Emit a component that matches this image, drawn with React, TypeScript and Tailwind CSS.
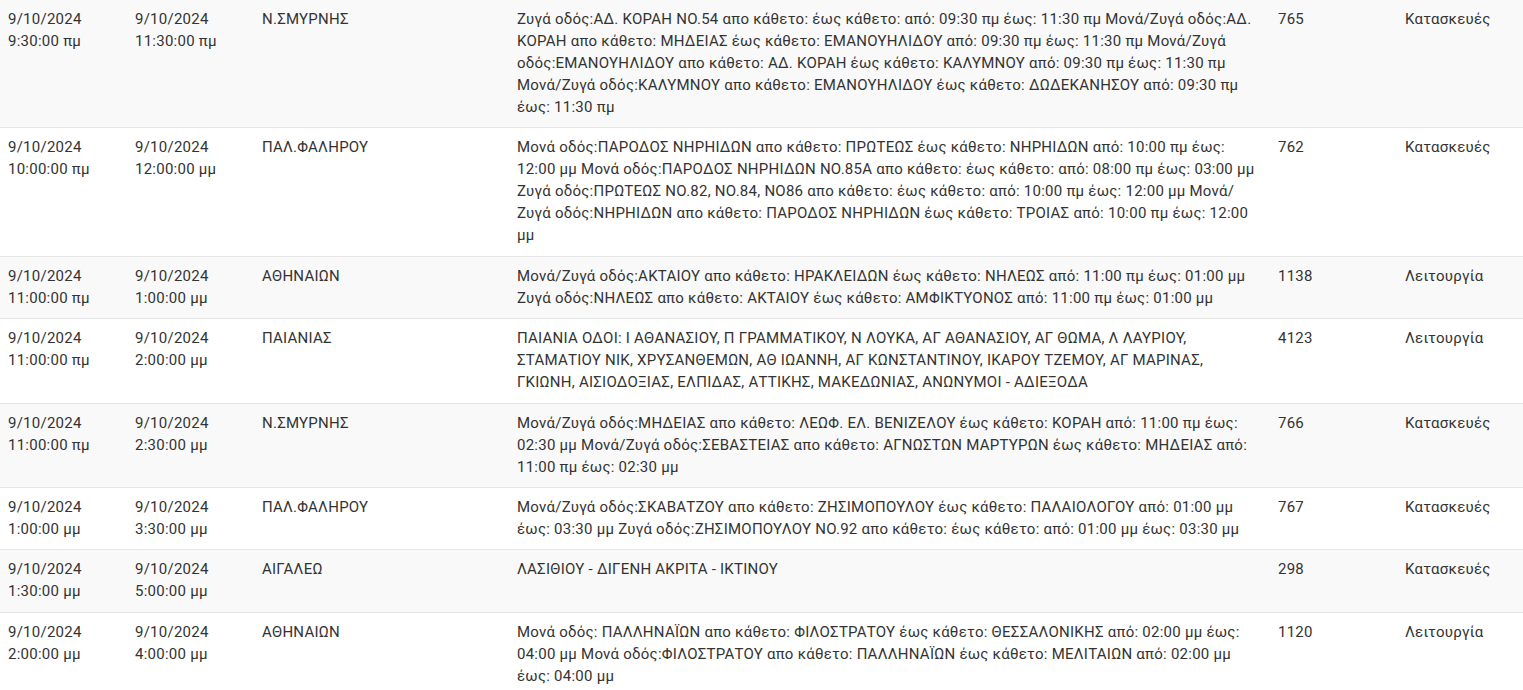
import React from 'react';

type Row = {
    fromDate: string;
    fromTime: string;
    toDate: string;
    toTime: string;
    area: string;
    streets: string;
    code: string;
    kind: string;
};

const rows: Row[] = [
    {
        fromDate: '9/10/2024',
        fromTime: '9:30:00 πμ',
        toDate: '9/10/2024',
        toTime: '11:30:00 πμ',
        area: 'Ν.ΣΜΥΡΝΗΣ',
        streets:
            'Ζυγά οδός:ΑΔ. ΚΟΡΑΗ ΝΟ.54 απο κάθετο: έως κάθετο: από: 09:30 πμ έως: 11:30 πμ Μονά/Ζυγά οδός:ΑΔ. ΚΟΡΑΗ απο κάθετο: ΜΗΔΕΙΑΣ έως κάθετο: ΕΜΑΝΟΥΗΛΙΔΟΥ από: 09:30 πμ έως: 11:30 πμ Μονά/Ζυγά οδός:ΕΜΑΝΟΥΗΛΙΔΟΥ απο κάθετο: ΑΔ. ΚΟΡΑΗ έως κάθετο: ΚΑΛΥΜΝΟΥ από: 09:30 πμ έως: 11:30 πμ Μονά/Ζυγά οδός:ΚΑΛΥΜΝΟΥ απο κάθετο: ΕΜΑΝΟΥΗΛΙΔΟΥ έως κάθετο: ΔΩΔΕΚΑΝΗΣΟΥ από: 09:30 πμ έως: 11:30 πμ',
        code: '765',
        kind: 'Κατασκευές',
    },
    {
        fromDate: '9/10/2024',
        fromTime: '10:00:00 πμ',
        toDate: '9/10/2024',
        toTime: '12:00:00 μμ',
        area: 'ΠΑΛ.ΦΑΛΗΡΟΥ',
        streets:
            'Μονά οδός:ΠΑΡΟΔΟΣ ΝΗΡΗΙΔΩΝ απο κάθετο: ΠΡΩΤΕΩΣ έως κάθετο: ΝΗΡΗΙΔΩΝ από: 10:00 πμ έως: 12:00 μμ Μονά οδός:ΠΑΡΟΔΟΣ ΝΗΡΗΙΔΩΝ ΝΟ.85Α απο κάθετο: έως κάθετο: από: 08:00 πμ έως: 03:00 μμ Ζυγά οδός:ΠΡΩΤΕΩΣ ΝΟ.82, ΝΟ.84, ΝΟ86 απο κάθετο: έως κάθετο: από: 10:00 πμ έως: 12:00 μμ Μονά/Ζυγά οδός:ΝΗΡΗΙΔΩΝ απο κάθετο: ΠΑΡΟΔΟΣ ΝΗΡΗΙΔΩΝ έως κάθετο: ΤΡΟΙΑΣ από: 10:00 πμ έως: 12:00 μμ',
        code: '762',
        kind: 'Κατασκευές',
    },
    {
        fromDate: '9/10/2024',
        fromTime: '11:00:00 πμ',
        toDate: '9/10/2024',
        toTime: '1:00:00 μμ',
        area: 'ΑΘΗΝΑΙΩΝ',
        streets:
            'Μονά/Ζυγά οδός:ΑΚΤΑΙΟΥ απο κάθετο: ΗΡΑΚΛΕΙΔΩΝ έως κάθετο: ΝΗΛΕΩΣ από: 11:00 πμ έως: 01:00 μμ Ζυγά οδός:ΝΗΛΕΩΣ απο κάθετο: ΑΚΤΑΙΟΥ έως κάθετο: ΑΜΦΙΚΤΥΟΝΟΣ από: 11:00 πμ έως: 01:00 μμ',
        code: '1138',
        kind: 'Λειτουργία',
    },
    {
        fromDate: '9/10/2024',
        fromTime: '11:00:00 πμ',
        toDate: '9/10/2024',
        toTime: '2:00:00 μμ',
        area: 'ΠΑΙΑΝΙΑΣ',
        streets:
            'ΠΑΙΑΝΙΑ ΟΔΟΙ: Ι ΑΘΑΝΑΣΙΟΥ, Π ΓΡΑΜΜΑΤΙΚΟΥ, Ν ΛΟΥΚΑ, ΑΓ ΑΘΑΝΑΣΙΟΥ, ΑΓ ΘΩΜΑ, Λ ΛΑΥΡΙΟΥ, ΣΤΑΜΑΤΙΟΥ ΝΙΚ, ΧΡΥΣΑΝΘΕΜΩΝ, ΑΘ ΙΩΑΝΝΗ, ΑΓ ΚΩΝΣΤΑΝΤΙΝΟΥ, ΙΚΑΡΟΥ ΤΖΕΜΟΥ, ΑΓ ΜΑΡΙΝΑΣ, ΓΚΙΩΝΗ, ΑΙΣΙΟΔΟΞΙΑΣ, ΕΛΠΙΔΑΣ, ΑΤΤΙΚΗΣ, ΜΑΚΕΔΩΝΙΑΣ, ΑΝΩΝΥΜΟΙ - ΑΔΙΕΞΟΔΑ',
        code: '4123',
        kind: 'Λειτουργία',
    },
    {
        fromDate: '9/10/2024',
        fromTime: '11:00:00 πμ',
        toDate: '9/10/2024',
        toTime: '2:30:00 μμ',
        area: 'Ν.ΣΜΥΡΝΗΣ',
        streets:
            'Μονά/Ζυγά οδός:ΜΗΔΕΙΑΣ απο κάθετο: ΛΕΩΦ. ΕΛ. ΒΕΝΙΖΕΛΟΥ έως κάθετο: ΚΟΡΑΗ από: 11:00 πμ έως: 02:30 μμ Μονά/Ζυγά οδός:ΣΕΒΑΣΤΕΙΑΣ απο κάθετο: ΑΓΝΩΣΤΩΝ ΜΑΡΤΥΡΩΝ έως κάθετο: ΜΗΔΕΙΑΣ από: 11:00 πμ έως: 02:30 μμ',
        code: '766',
        kind: 'Κατασκευές',
    },
    {
        fromDate: '9/10/2024',
        fromTime: '1:00:00 μμ',
        toDate: '9/10/2024',
        toTime: '3:30:00 μμ',
        area: 'ΠΑΛ.ΦΑΛΗΡΟΥ',
        streets:
            'Μονά/Ζυγά οδός:ΣΚΑΒΑΤΖΟΥ απο κάθετο: ΖΗΣΙΜΟΠΟΥΛΟΥ έως κάθετο: ΠΑΛΑΙΟΛΟΓΟΥ από: 01:00 μμ έως: 03:30 μμ Ζυγά οδός:ΖΗΣΙΜΟΠΟΥΛΟΥ ΝΟ.92 απο κάθετο: έως κάθετο: από: 01:00 μμ έως: 03:30 μμ',
        code: '767',
        kind: 'Κατασκευές',
    },
    {
        fromDate: '9/10/2024',
        fromTime: '1:30:00 μμ',
        toDate: '9/10/2024',
        toTime: '5:00:00 μμ',
        area: 'ΑΙΓΑΛΕΩ',
        streets: 'ΛΑΣΙΘΙΟΥ - ΔΙΓΕΝΗ ΑΚΡΙΤΑ - ΙΚΤΙΝΟΥ',
        code: '298',
        kind: 'Κατασκευές',
    },
    {
        fromDate: '9/10/2024',
        fromTime: '2:00:00 μμ',
        toDate: '9/10/2024',
        toTime: '4:00:00 μμ',
        area: 'ΑΘΗΝΑΙΩΝ',
        streets:
            'Μονά οδός: ΠΑΛΛΗΝΑΪΩΝ απο κάθετο: ΦΙΛΟΣΤΡΑΤΟΥ έως κάθετο: ΘΕΣΣΑΛΟΝΙΚΗΣ από: 02:00 μμ έως: 04:00 μμ Μονά οδός:ΦΙΛΟΣΤΡΑΤΟΥ απο κάθετο: ΠΑΛΛΗΝΑΪΩΝ έως κάθετο: ΜΕΛΙΤΑΙΩΝ από: 02:00 μμ έως: 04:00 μμ',
        code: '1120',
        kind: 'Λειτουργία',
    },
];

export default function App() {
    return (
        <div className="w-[1523px] h-[690px] overflow-hidden bg-white font-['Roboto',sans-serif] text-[15px] leading-[22px] tracking-[0.25px] text-[#333]">
            <table className="w-full table-fixed border-collapse">
                <colgroup>
                    <col className="w-[127px]" />
                    <col className="w-[127px]" />
                    <col className="w-[255px]" />
                    <col className="w-[761px]" />
                    <col className="w-[127px]" />
                    <col />
                </colgroup>
                <tbody>
                    {rows.map((row, i) => (
                        <tr
                            key={i}
                            className={`border-b border-[#e6e6e6] align-top ${i % 2 === 0 ? 'bg-[#f9f9f9]' : 'bg-white'}`}
                        >
                            <td className="px-2 pt-2 pb-[9.4px]">
                                {row.fromDate}
                                <br />
                                {row.fromTime}
                            </td>
                            <td className="px-2 pt-2 pb-[9.4px]">
                                {row.toDate}
                                <br />
                                {row.toTime}
                            </td>
                            <td className="px-2 pt-2 pb-[9.4px]">{row.area}</td>
                            <td className="px-2 pt-2 pb-[9.4px]">{row.streets}</td>
                            <td className="px-2 pt-2 pb-[9.4px]">{row.code}</td>
                            <td className="px-2 pt-2 pb-[9.4px]">{row.kind}</td>
                        </tr>
                    ))}
                </tbody>
            </table>
        </div>
    );
}
